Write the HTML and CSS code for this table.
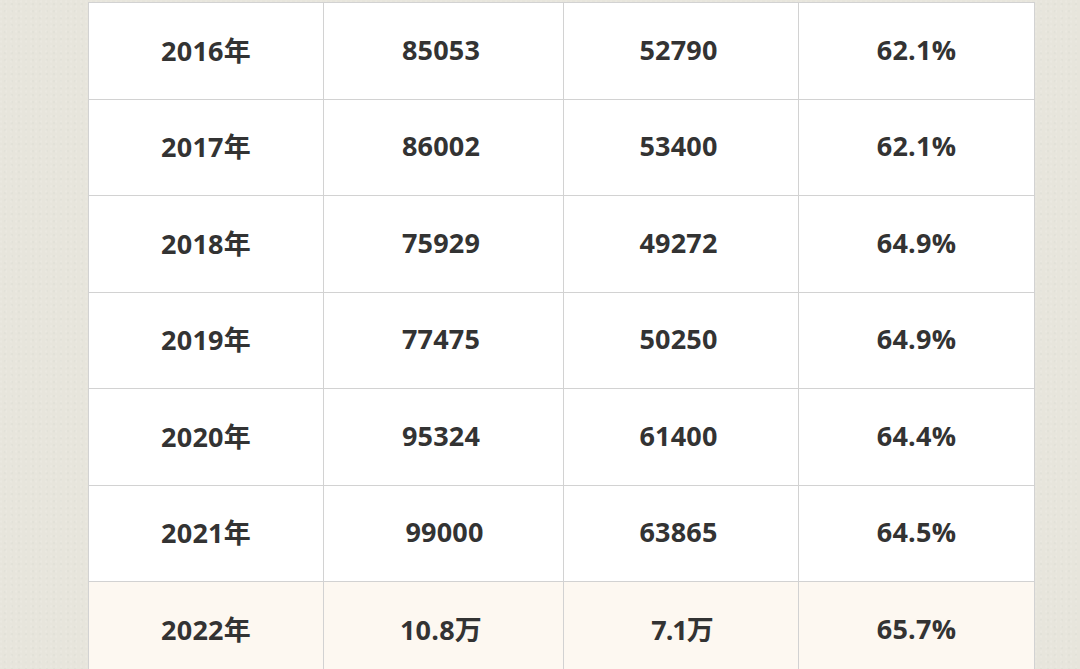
FILE: index.html
```html
<!DOCTYPE html>
<html lang="zh">
<head>
<meta charset="utf-8">
<link rel="stylesheet" href="styles.css">
</head>
<body>
<div class="page">
  <table class="data">
    <colgroup>
      <col class="c1"><col class="c2"><col class="c3"><col class="c4">
    </colgroup>
    <tbody>
      <tr><td>2016年</td><td class="nudge">85053</td><td class="nudge">52790</td><td>62.1%</td></tr>
      <tr><td>2017年</td><td class="nudge">86002</td><td class="nudge">53400</td><td>62.1%</td></tr>
      <tr><td>2018年</td><td class="nudge">75929</td><td class="nudge">49272</td><td>64.9%</td></tr>
      <tr><td>2019年</td><td class="nudge">77475</td><td class="nudge">50250</td><td>64.9%</td></tr>
      <tr><td>2020年</td><td class="nudge">95324</td><td class="nudge">61400</td><td>64.4%</td></tr>
      <tr><td>2021年</td><td class="push">99000</td><td class="nudge">63865</td><td>64.5%</td></tr>
      <tr class="hl"><td>2022年</td><td class="nudge">10.8万</td><td class="tight">7.1万</td><td>65.7%</td></tr>
    </tbody>
  </table>
</div>
</body>
</html>
```
FILE: styles.css
```css
html, body {
  margin: 0;
  padding: 0;
  height: 100%;
  overflow: hidden;
}
body {
  background-color: #e7e5dc;
  background-image:
    radial-gradient(circle at 20% 30%, rgba(255,255,255,0.12) 0 1px, transparent 1.5px),
    radial-gradient(circle at 70% 60%, rgba(0,0,0,0.02) 0 1px, transparent 1.5px);
  background-size: 5px 5px, 7px 7px;
  font-family: "Open Sans", "Noto Sans CJK SC", sans-serif;
}
.page {
  padding: 2px 0 0 88px;
}
.data {
  border-collapse: collapse;
  table-layout: fixed;
  width: 946px;
  background: #ffffff;
}
.c1 { width: 235px; }
.c2 { width: 240px; }
.c3 { width: 235px; }
.c4 { width: 236px; }
.data td {
  border: 1px solid #d2d2d2;
  height: 92.5px;
  padding: 0 0 3px 0;
  text-align: center;
  vertical-align: middle;
  font-size: 27px;
  font-weight: 700;
  color: #333333;
  letter-spacing: 0.2px;
}
.data td.nudge { padding-right: 5px; }
.data td.push { padding-left: 2px; }
.data td.tight { letter-spacing: -1px; padding-left: 2px; }
.data tr.hl td {
  background: #fdf8f1;
}
```
